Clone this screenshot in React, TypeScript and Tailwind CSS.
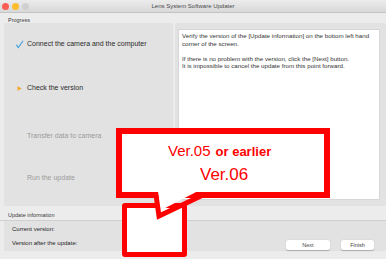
import React from "react";

const steps = [
  { label: "Connect the camera and the computer", state: "done", mt: "mt-[16px]" },
  { label: "Check the version", state: "current", mt: "mt-[34px]" },
  { label: "Transfer data to camera", state: "todo", mt: "mt-[38px]" },
  { label: "Run the update", state: "todo", mt: "mt-[32px]" },
];

function StepIcon({ state }: { state: string }) {
  if (state === "done") {
    return (
      <svg width="9" height="9" viewBox="0 0 9 9">
        <path d="M1.5 5.2 L3.3 7.6 L7.8 1.2" fill="none" stroke="#3f9ee0" strokeWidth="1.1" strokeLinecap="round" />
      </svg>
    );
  }
  if (state === "current") {
    return (
      <svg width="9" height="9" viewBox="0 0 9 9">
        <path d="M2.5 2.2 L6.6 4.5 L2.5 6.8 Z" fill="#f5a623" />
      </svg>
    );
  }
  return <span className="w-[9px] h-[9px]" />;
}

export default function App() {
  return (
    <div
      className="relative w-[386px] h-[259px] overflow-hidden bg-[#ececec] text-[#2a2a2a]"
      style={{ fontFamily: '"Liberation Sans", Arial, sans-serif' }}
    >
      {/* TITLE BAR */}
      <div className="relative h-[13px] flex items-center bg-gradient-to-b from-[#ececec] to-[#d8d8d8] border-b border-[#c4c4c4]">
        <div className="flex items-center gap-[3px] pl-[2px]">
          <span className="w-[7px] h-[7px] rounded-full bg-[#fc5c56]" />
          <span className="w-[7px] h-[7px] rounded-full bg-[#fdbc2e]" />
          <span className="w-[7px] h-[7px] rounded-full bg-[#d0d0d0]" />
        </div>
        <div className="absolute inset-0 flex items-center justify-center text-[6px] text-[#4a4a4a]">
          Lens System Software Updater
        </div>
      </div>

      {/* PROGRESS LABEL */}
      <div className="h-[10px] pl-[8px] pt-[4px] text-[5.5px] leading-[6px] text-[#3a3a3a]">Progress</div>

      {/* MAIN */}
      <div className="flex h-[183px]">
        <div className="ml-[4px] w-[169px] bg-[#e2e2e2] rounded-[2px] flex flex-col pl-[11px]">
          {steps.map((s) => (
            <div key={s.label} className={`${s.mt} h-[10px] flex items-center gap-[3px]`}>
              <StepIcon state={s.state} />
              <span
                className={`text-[7px] leading-[10px] ${
                  s.state === "todo" ? "text-[#9a9a9a]" : "text-[#2a2a2a]"
                }`}
              >
                {s.label}
              </span>
            </div>
          ))}
        </div>
        <div className="ml-[2px] flex-1 bg-[#e2e2e2] rounded-[2px] pl-[3px] pt-[6px] pr-[6px] pb-[6px]">
          <div className="h-full bg-white border border-[#d6d6d6] pl-[3px] pr-[4px] pt-[2px] text-[6.2px] leading-[7.5px] text-[#333]">
            <p>Verify the version of the [Update information] on the bottom left hand corner of the screen.</p>
            <p className="mt-[7.5px]">If there is no problem with the version, click the [Next] button.</p>
            <p>It is impossible to cancel the update from this point forward.</p>
          </div>
        </div>
      </div>

      {/* UPDATE INFORMATION */}
      <div className="h-[14px] pl-[8px] pt-[6px] text-[5.5px] leading-[6px] text-[#3a3a3a]">Update information</div>
      <div className="border-t border-[#cfcfcf]" />
      <div className="ml-[4px] h-[30px] bg-[#e2e2e2] flex justify-between">
        <div className="pl-[8px] pt-[5px] flex flex-col gap-[8px] text-[6px] leading-[6px] text-[#222]">
          <span>Current version:</span>
          <span>Version after the update:</span>
        </div>
        <div className="self-end flex gap-[11px] pr-[12px] pb-[1px]">
          <button className="w-[44px] h-[10px] bg-white rounded-[2px] shadow-[0_0.5px_1px_rgba(0,0,0,0.25)] text-[5.5px] leading-[10px] text-[#444]">
            Next
          </button>
          <button className="w-[33px] h-[10px] bg-white rounded-[2px] shadow-[0_0.5px_1px_rgba(0,0,0,0.25)] text-[5.5px] leading-[10px] text-[#444]">
            Finish
          </button>
        </div>
      </div>

      {/* CALLOUT */}
      <div className="absolute left-[122px] top-[203px] w-[65px] h-[54px] border-[5px] border-[#ff0000] rounded-[3px] bg-white" />
      <div className="absolute left-[116px] top-[128px] w-[214px] h-[70px] border-[6px] border-[#ff0000] bg-white text-[#ff0000]">
        <div className="pl-[46px] pt-[9px] flex items-baseline gap-[5px] leading-[15px]">
          <span className="text-[15px]">Ver.05</span>
          <span className="text-[13px] font-bold">or earlier</span>
        </div>
        <div className="pl-[78px] mt-[7px] text-[17px] leading-[17px]">Ver.06</div>
      </div>
      <svg className="absolute left-[140px] top-[185px]" width="70" height="40" viewBox="0 0 70 40">
        <polygon points="18,5 19.5,26 60,5" fill="#ffffff" />
        <polyline points="16,10 19,31 63,10" fill="none" stroke="#ff0000" strokeWidth="5" strokeLinejoin="miter" />
      </svg>
    </div>
  );
}
